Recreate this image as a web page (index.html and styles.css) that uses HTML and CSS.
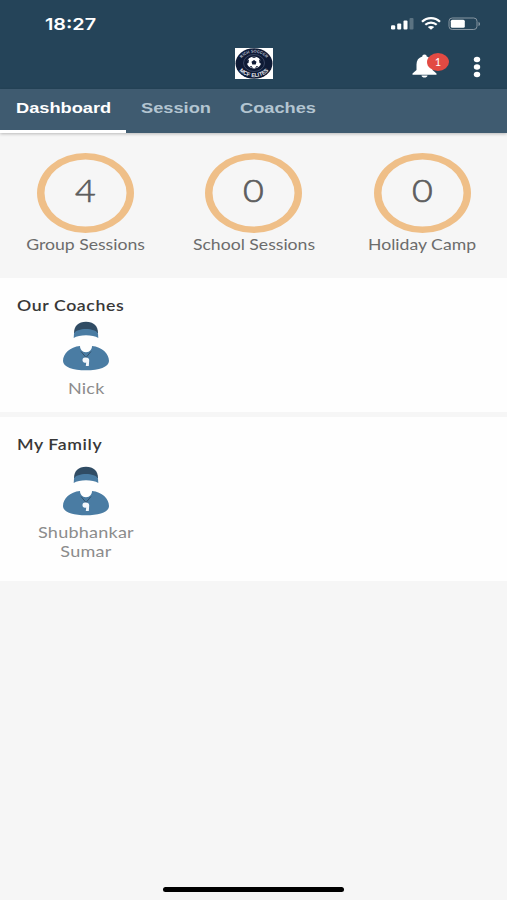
FILE: index.html
```html
<!DOCTYPE html>
<html lang="en">
<head>
<meta charset="utf-8">
<title>Dashboard</title>
<link rel="stylesheet" href="styles.css">
</head>
<body>
<svg class="defs" width="0" height="0" aria-hidden="true">
  <symbol id="coach" viewBox="0 0 48 50">
    <path fill="#4a7ca3" d="M18 25C8 26 1 32.500 1 40C1 46 11 49.300 24 49.300S47 46 47 40C47 32.500 40 26 30 25C30 28 28 31.200 24 31.200S18 28 18 25Z"/>
    <path fill="#304c64" d="M12 12C12 5 16.500 .8 24 .8S36 5 36 12Z"/>
    <path fill="#4a7ca3" d="M12 12.500C14.500 6.500 33.500 6.500 36 12.500L36.300 17C31 13.200 17 13.200 11.700 17Z"/>
    <path fill="none" stroke="#304c64" stroke-width=".9" d="M19 30.500L24 36.500L29 30.500"/>
    <path fill="#f2f7fc" d="M23 36.600C25.500 36.300 27.400 37.300 27.200 39.500L26.800 45H23.800L24.200 41.500C21.800 42.300 20.300 40.800 20.500 38.800C20.700 37.300 21.700 36.700 23 36.600Z"/>
  </symbol>
</svg>
<header class="top">
  <div class="status">
    <span class="time"><span class="wide">18:27</span></span>
    <svg class="indicators" width="92" height="16" viewBox="0 0 92 16">
      <g fill="#fff">
        <rect x="1" y="9.300" width="4.200" height="4.200" rx="1.200"/>
        <rect x="7.200" y="7.500" width="4" height="6" rx="1"/>
        <rect x="13.500" y="4.500" width="4" height="9" rx="1"/>
        <rect x="19.500" y="2" width="4" height="11.500" rx="1" opacity=".25"/>
      </g>
      <g fill="none" stroke="#fff" stroke-width="2.200">
        <path d="M32 5.800C37 .9 45 .9 50 5.800"/>
        <path d="M35.300 8.800C38.500 5.800 43.500 5.800 46.700 8.800"/>
      </g>
      <path fill="#fff" d="M37.800 11C39.500 9.500 42.500 9.500 44.200 11L41 13.700Z"/>
      <rect x="59" y="2" width="28" height="11.500" rx="3.200" fill="none" stroke="#8796a2"/>
      <rect x="60.800" y="3.700" width="14" height="8.100" rx="1.500" fill="#fff"/>
      <path fill="#8796a2" d="M88.500 6C90.500 6.500 90.500 9.500 88.500 10Z"/>
    </svg>
  </div>
  <div class="bar">
    <svg class="logo" width="38" height="31" viewBox="0 0 38 31">
      <defs>
        <path id="arc-top" d="M5 15.500A14 11 0 0 1 33 15.500"/>
        <path id="arc-bottom" d="M1.800 15.500A17.200 13.500 0 0 0 36.200 15.500"/>
      </defs>
      <rect width="38" height="31" fill="#fff"/>
      <ellipse cx="19" cy="15.500" rx="18.500" ry="15.300" fill="#0e1a35"/>
      <ellipse cx="19" cy="15" rx="10.500" ry="8.500" fill="none" stroke="#56617e" stroke-width=".6"/>
      <ellipse cx="19" cy="14.500" rx="7" ry="6" fill="#fff"/>
      <path fill="#0e1a35" d="M19 12L21.500 13.700L20.700 16.500H17.300L16.500 13.700ZM16.500 9L19 10L21.500 9L20 8.500H18ZM12 12.500L14 11.500L13.500 15L12 15.500ZM26 12.500L24 11.500L24.500 15L26 15.500ZM14.500 18.500L16.500 18L18 20.300ZM23.500 18.500L21.500 18L20 20.300Z"/>
      <text class="crest small"><textPath href="#arc-top" startOffset="50%">RICH SOCCER</textPath></text>
      <text class="crest"><textPath href="#arc-bottom" startOffset="50%">MCF ELITES</textPath></text>
    </svg>
    <svg class="bell" width="26" height="24" viewBox="0 0 26 24">
      <path fill="#fff" d="M12.500 .5C14 .5 14.700 1.300 14.700 2.600C18.500 3.700 20.500 6.500 20.500 10.500V16L24.500 19.500V20.800H.5V19.500L4.500 16V10.500C4.500 6.500 6.500 3.700 10.300 2.600C10.300 1.300 11 .5 12.500 .5ZM9.500 21.500H15.500C15.200 24.200 9.800 24.200 9.500 21.500Z"/>
    </svg>
    <span class="badge">1</span>
    <svg class="more" width="8" height="22" viewBox="0 0 8 22" fill="#fff">
      <ellipse cx="4" cy="3.500" rx="3.200" ry="2.700"/>
      <ellipse cx="4" cy="11" rx="3.200" ry="2.700"/>
      <ellipse cx="4" cy="18.500" rx="3.200" ry="2.700"/>
    </svg>
  </div>
</header>
<nav class="tabs">
  <a class="tab active"><span class="wide">Dashboard</span></a>
  <a class="tab session"><span class="wide">Session</span></a>
  <a class="tab coaches"><span class="wide">Coaches</span></a>
</nav>
<main>
  <section class="stats">
    <div class="stat"><div class="ring"><svg width="97" height="80" viewBox="0 0 97 80"><path fill="#efbf88" fill-rule="evenodd" d="M0 40A48.500 40 0 0 1 97 40A48.500 40 0 0 1 0 40ZM7.500 40A41 33.500 0 0 0 89.500 40A41 33.500 0 0 0 7.500 40Z"/></svg><span class="number">4</span></div><span class="label">Group Sessions</span></div>
    <div class="stat"><div class="ring"><svg width="97" height="80" viewBox="0 0 97 80"><path fill="#efbf88" fill-rule="evenodd" d="M0 40A48.500 40 0 0 1 97 40A48.500 40 0 0 1 0 40ZM7.500 40A41 33.500 0 0 0 89.500 40A41 33.500 0 0 0 7.500 40Z"/></svg><span class="number">0</span></div><span class="label">School Sessions</span></div>
    <div class="stat"><div class="ring"><svg width="97" height="80" viewBox="0 0 97 80"><path fill="#efbf88" fill-rule="evenodd" d="M0 40A48.500 40 0 0 1 97 40A48.500 40 0 0 1 0 40ZM7.500 40A41 33.500 0 0 0 89.500 40A41 33.500 0 0 0 7.500 40Z"/></svg><span class="number">0</span></div><span class="label">Holiday Camp</span></div>
  </section>
  <section class="panel coaches-panel">
    <h2 class="wide">Our Coaches</h2>
    <div class="person"><svg width="48" height="50"><use href="#coach"/></svg><span class="name">Nick</span></div>
  </section>
  <section class="panel family-panel">
    <h2 class="wide">My Family</h2>
    <div class="person"><svg width="48" height="50"><use href="#coach"/></svg><span class="name">Shubhankar<br>Sumar</span></div>
  </section>
</main>
<footer class="home"><div class="home-line"></div></footer>
</body>
</html>
```
FILE: styles.css
```css
* { box-sizing: border-box; }
body {
  margin: 0;
  height: 900px;
  display: flex;
  flex-direction: column;
  background: #f6f6f6;
  color: #6c6c6c;
  font-family: Lato, "Open Sans", sans-serif;
  font-size: 15px;
  overflow: hidden;
}
svg { display: block; flex: none; }
.defs { position: absolute; }
.wide { display: block; width: max-content; transform-origin: left center; transform: scaleX(1.18); }

.top { height: 89px; background: #254459; color: #fff; }
.status { display: flex; justify-content: space-between; height: 45px; padding: 13px 25px 0 45px; }
.time { font: 600 16.5px/22px Inter, sans-serif; }
.time .wide { transform: scaleX(1.2); }
.indicators { margin: 3px 0 0; }
.bar { display: flex; height: 44px; padding-left: 235px; }
.logo { margin-top: 3px; }
.crest { fill: #e8eaf2; font: 700 5.500px "Liberation Sans", sans-serif; text-anchor: middle; }
.crest.small { font-size: 4px; fill: #b4bccd; }
.bell { margin: 9px 0 0 139px; }
.badge {
  width: 22px; height: 18px; margin: 8px 0 0 -11px;
  border-radius: 50%; background: #e24a43;
  font: 11px/17px Lato, sans-serif; text-align: center;
}
.more { margin: 11px 0 0 24px; }

.tabs {
  display: flex; flex: none; height: 44px; background: #3f5b70;
  box-shadow: 0 1px 3px rgba(0, 0, 0, .25); z-index: 1;
  font: 700 15px/20px "Liberation Sans", sans-serif; color: #b3c5d1;
}
.tabs .wide { transform: scaleX(1.215); }
.tab { padding-top: 9px; }
.active { width: 126px; padding-left: 16px; color: #fff; border-bottom: 3px solid #fff; }
.session { width: 114px; padding-left: 15px; }

.stats { display: grid; grid-template-columns: repeat(3, 168.5px); height: 145px; padding: 20px 0 0 1px; }
.stat { display: flex; flex-direction: column; align-items: center; }
.ring { display: grid; place-items: center; }
.ring > * { grid-area: 1 / 1; }
.number { font-size: 32px; font-weight: 300; line-height: 40px; margin-top: -7px; transform: scaleX(1.12); color: #5d5d5d; -webkit-text-stroke: .7px #5d5d5d; }
.label { line-height: 20px; margin-top: 1px; white-space: nowrap; transform: scaleX(1.175); }

.panel { background: #fefefe; }
.coaches-panel { height: 134px; padding: 17px 17px 0; }
.family-panel { height: 164px; margin-top: 5px; padding: 17px 17px 0; }
h2 { margin: 0; font-size: 15px; line-height: 20px; font-weight: 600; letter-spacing: .5px; color: #383838; }
.person { width: 138px; display: flex; flex-direction: column; align-items: center; margin-top: 6px; }
.family-panel .person { margin-top: 12px; }
.name { margin-top: 7px; line-height: 19px; letter-spacing: .2px; text-align: center; color: #8c8c8c; transform: scaleX(1.2); }
.coaches-panel .name { margin-top: 8px; }

.home { display: flex; justify-content: center; margin-top: auto; padding-bottom: 8px; }
.home-line { width: 181px; height: 5px; border-radius: 3px; background: #000; }
```
